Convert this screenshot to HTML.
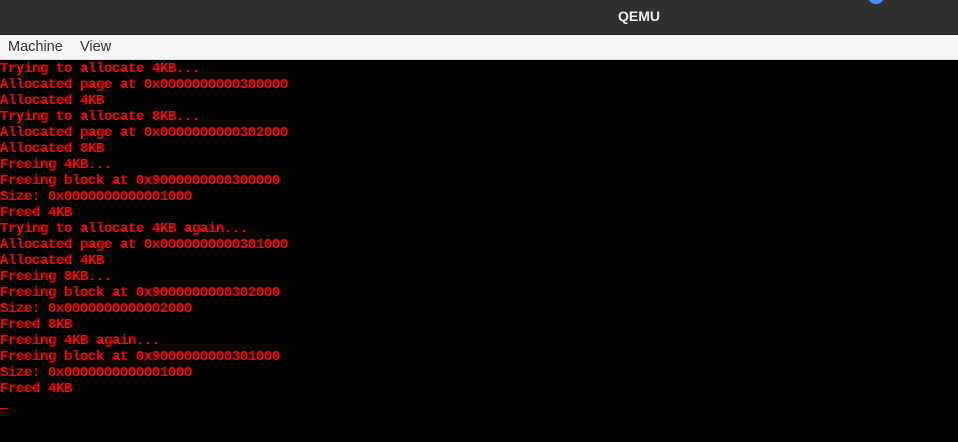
<!DOCTYPE html>
<html><head><meta charset="utf-8"><style>
html,body{margin:0;padding:0;width:958px;height:442px;overflow:hidden;background:#000}
#title{position:absolute;left:0;top:0;width:958px;height:34px;background:#303030;border-bottom:1px solid #222}
#title span{position:absolute;left:618px;top:8px;color:#eee;font:bold 14px "Liberation Sans",sans-serif}
#dot{position:absolute;left:868px;top:-10px;width:16px;height:14px;border-radius:50%;background:#4a8cf0}
#menu{position:absolute;left:0;top:35px;width:958px;height:24px;background:#f6f6f6;border-bottom:1px solid #ddd}
#menu span{position:absolute;top:4px;color:#333;font:14.5px "Liberation Sans",sans-serif}
#term{position:absolute;left:0;top:60px;width:958px;height:382px;background:#000}
pre{position:absolute;left:0;top:1px;margin:0;color:#f00;font:bold 14px/16px "Liberation Mono",monospace;letter-spacing:-0.4px}
#cur{position:absolute;left:0;top:348px;width:8px;height:1px;background:#e00}
</style></head><body>
<div id="title"><span>QEMU</span><div id="dot"></div></div>
<div id="menu"><span style="left:8px">Machine</span><span style="left:80px">View</span></div>
<div id="term"><pre>Trying to allocate 4KB...
Allocated page at 0x0000000000300000
Allocated 4KB
Trying to allocate 8KB...
Allocated page at 0x0000000000302000
Allocated 8KB
Freeing 4KB...
Freeing block at 0x9000000000300000
Size: 0x0000000000001000
Freed 4KB
Trying to allocate 4KB again...
Allocated page at 0x0000000000301000
Allocated 4KB
Freeing 8KB...
Freeing block at 0x9000000000302000
Size: 0x0000000000002000
Freed 8KB
Freeing 4KB again...
Freeing block at 0x9000000000301000
Size: 0x0000000000001000
Freed 4KB</pre><div id="cur"></div></div>
</body></html>
